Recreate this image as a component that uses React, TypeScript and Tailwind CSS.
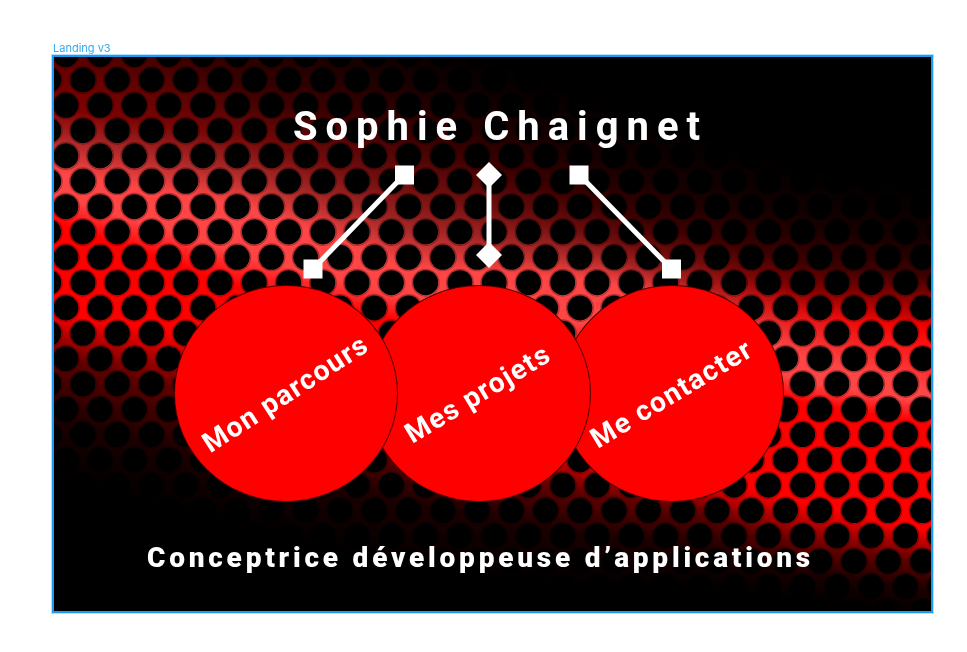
type Rgb = [number, number, number];

type Profile = { x: number; ys: number[]; mid: Rgb; rise: Rgb };

const WIDTH = 877;
const HEIGHT = 554;

// Vertical light profiles of the metal sheet, from left to right.
const PROFILES: Profile[] = [
  { x: 0, ys: [-150, -100, -60, 50, 82, 116, 138, 165, 255, 300, 360, 425], mid: [128, 0, 0], rise: [176, 40, 40] },
  { x: 196, ys: [-90, -30, 35, 82, 117, 152, 200, 235, 290, 350, 415, 475], mid: [115, 8, 8], rise: [168, 40, 40] },
  { x: 346, ys: [-30, 22, 76, 128, 170, 210, 240, 265, 340, 400, 445, 515], mid: [112, 14, 14], rise: [165, 38, 38] },
  { x: 546, ys: [40, 105, 150, 180, 198, 225, 270, 300, 400, 440, 480, 535], mid: [110, 12, 12], rise: [160, 34, 34] },
  { x: 646, ys: [75, 140, 180, 205, 230, 252, 290, 320, 420, 455, 490, 535], mid: [112, 10, 10], rise: [176, 28, 28] },
  { x: 746, ys: [110, 165, 205, 235, 255, 300, 325, 345, 445, 490, 515, 545], mid: [140, 0, 0], rise: [225, 14, 14] },
  { x: 877, ys: [130, 190, 220, 245, 275, 335, 347, 368, 475, 505, 535, 560], mid: [150, 0, 0], rise: [255, 0, 0] },
];

const lerp = (a: number, b: number, t: number) => a + (b - a) * t;
const mix = (a: Rgb, b: Rgb, t: number) =>
  `rgb(${a.map((v, i) => Math.round(lerp(v, b[i], t))).join(",")})`;

const STRIP = 4;
const strips = Array.from({ length: Math.ceil(WIDTH / STRIP) }, (_, i) => {
  const x = i * STRIP;
  let k = 0;
  while (k < PROFILES.length - 2 && PROFILES[k + 1].x < x) k++;
  const a = PROFILES[k];
  const b = PROFILES[k + 1];
  const t = (x - a.x) / (b.x - a.x);
  const colors = [
    "#000000",
    "#180000",
    "#3c0000",
    mix(a.mid, b.mid, t),
    mix(a.rise, b.rise, t),
    "#ff4646",
    "#ff4444",
    "#ff0000",
    "#ff0000",
    "#600000",
    "#1c0000",
    "#000000",
  ];
  return { x, stops: colors.map((color, n) => ({ color, y: lerp(a.ys[n], b.ys[n], t) })) };
});

const holes: { x: number; y: number }[] = [];
for (let row = -1; row < 23; row++) {
  for (let col = -1; col < 27; col++) {
    holes.push({
      x: 29 + col * 34.27 - (row % 2 !== 0 ? 17.13 : 0),
      y: 23 + row * 25.33,
    });
  }
}

function MetalBackground() {
  return (
    <svg
      className="absolute inset-0 h-full w-full"
      viewBox={`0 0 ${WIDTH} ${HEIGHT}`}
      preserveAspectRatio="xMidYMid slice"
      aria-hidden="true"
    >
      <defs>
        {strips.map((s) => (
          <linearGradient
            key={s.x}
            id={`strip-${s.x}`}
            gradientUnits="userSpaceOnUse"
            x1="0"
            x2="0"
            y1="-200"
            y2="600"
          >
            {s.stops.map((stop, i) => (
              <stop key={i} offset={(stop.y + 200) / 800} stopColor={stop.color} />
            ))}
          </linearGradient>
        ))}
        <g id="holes">
          {holes.map((h, i) => (
            <circle key={i} cx={h.x} cy={h.y} r="12.5" />
          ))}
        </g>
      </defs>
      <rect width={WIDTH} height={HEIGHT} fill="#000" />
      {strips.map((s) => (
        <rect key={s.x} x={s.x} y="0" width={STRIP + 1} height={HEIGHT} fill={`url(#strip-${s.x})`} />
      ))}
      <use href="#holes" fill="none" stroke="#000" strokeOpacity="0.3" strokeWidth="3" />
      <use href="#holes" x="0.3" y="0.4" fill="#606060" style={{ mixBlendMode: "color-dodge" }} />
      <use href="#holes" fill="#000" />
    </svg>
  );
}

function Connectors() {
  return (
    <svg className="h-[117px] w-[378px]" viewBox="0 0 378 117" fill="#fff" stroke="none" aria-hidden="true">
      <g stroke="#fff" strokeWidth="5">
        <path d="M101.500 12.500 10 107" />
        <path d="M186 13V93" />
        <path d="M276 12.500 368.500 107" />
      </g>
      <path d="M92 3.500h19v19H92z" />
      <path d="M0.500 97.500h19v19h-19z" />
      <path d="M186 0l13 13-13 13-13-13z" />
      <path d="M186 80l13 13-13 13-13-13z" />
      <path d="M266.500 3.500h19v19h-19z" />
      <path d="M359 97.500h19v19h-19z" />
    </svg>
  );
}

const DISC =
  "relative flex h-[217px] w-[224px] shrink-0 cursor-pointer items-center justify-center rounded-[50%] border border-black/70 bg-[#ff0000] text-[28px] font-bold tracking-[0.05em] text-white";

export default function App() {
  return (
    <main className="min-h-screen bg-white pt-[41px] pr-[34px] pb-[39px] pl-[52px] font-['Roboto',sans-serif]">
      <p className="h-[14px] pl-px font-[Inter,sans-serif] text-[11px] leading-[14px] text-[#34a9f5]">Landing v3</p>
      <section className="relative flex flex-col items-center overflow-hidden border-2 border-[#1c9bf5] bg-black pt-[46px] pb-[35px] shadow-[0_0_0_1px_#b5e0fd]">
        <MetalBackground />
        <h1 className="relative pl-4 text-[40px] leading-[48px] font-bold tracking-[0.2em] whitespace-nowrap text-white">
          Sophie Chaignet
        </h1>
        <div className="relative mt-[11px] pr-0.5">
          <Connectors />
        </div>
        <nav className="relative mt-1.5 flex pr-7">
          <button type="button" className={`${DISC} z-20`}>
            <span className="-rotate-[33deg] whitespace-nowrap">Mon parcours</span>
          </button>
          <button type="button" className={`${DISC} z-10 -ml-[31px]`}>
            <span className="-rotate-[31deg] whitespace-nowrap">Mes projets</span>
          </button>
          <button type="button" className={`${DISC} -ml-[31px]`}>
            <span className="-rotate-[31deg] whitespace-nowrap">Me contacter</span>
          </button>
        </nav>
        <p className="relative mt-[38px] pr-6 text-[28px] leading-[36px] font-black tracking-[0.135em] whitespace-nowrap text-white">
          Conceptrice développeuse d’applications
        </p>
      </section>
    </main>
  );
}
